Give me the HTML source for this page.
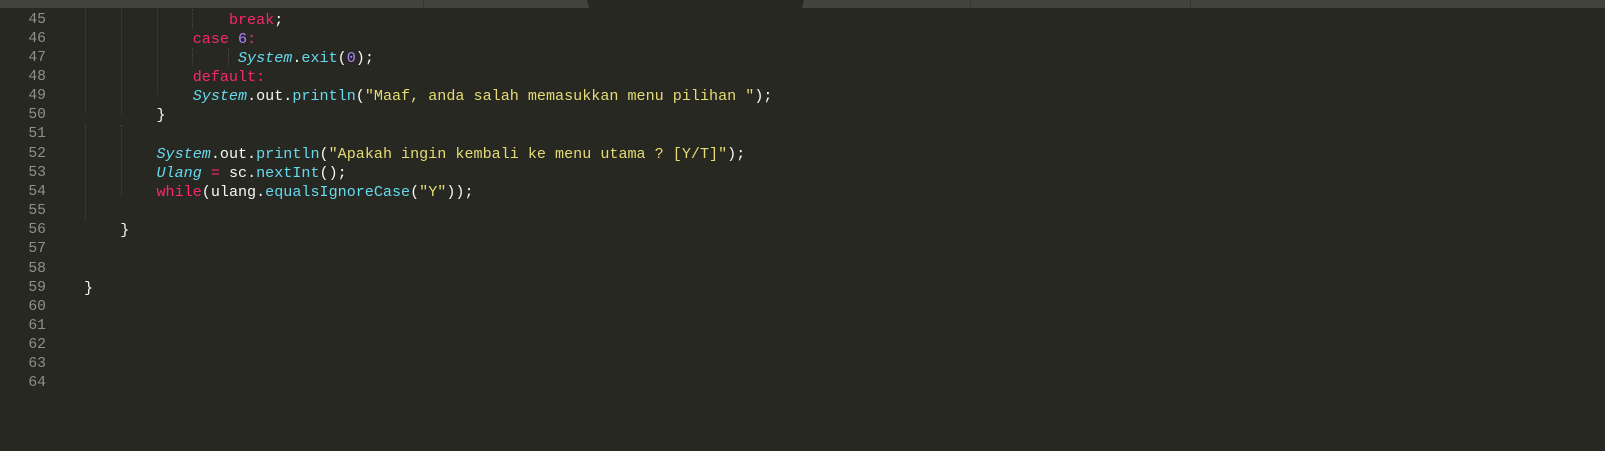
<!DOCTYPE html>
<html><head><style>
html,body{margin:0;padding:0;width:1605px;height:451px;overflow:hidden;background:#272822;}
.tabs{position:absolute;left:0;top:0;width:1605px;height:8px;background:#42433d;}
.tab{position:absolute;top:0;height:8px;background:#272822;left:587px;width:217px;clip-path:polygon(0 0,100% 0,99% 100%,1% 100%);}
.sep{position:absolute;top:0;height:8px;width:1px;background:#35362f;}
.code{position:absolute;left:0;top:10.5px;font-family:"Liberation Mono",monospace;font-size:15.1px;}
.r{position:relative;height:19.16px;line-height:19.16px;white-space:pre;color:#f8f8f2;}
.r b{font-weight:normal;position:absolute;left:0;width:46px;text-align:right;color:#8f908a;font-size:14.7px;}
.r span.t{position:absolute;left:84px;}
.g{position:absolute;top:9px;width:0;border-left:1px dotted #464740;}
.k{color:#f92672}.c{color:#66d9ef}.i{color:#66d9ef;font-style:italic}.s{color:#e6db74}.n{color:#ae81ff}
</style></head><body>
<div class="tabs"><div class="sep" style="left:423px"></div><div class="tab"></div><div class="sep" style="left:970px"></div><div class="sep" style="left:1190px"></div></div>
<div class="g" style="left:85px;height:105px"></div>
<div class="g" style="left:121px;height:105px"></div>
<div class="g" style="left:85px;top:125px;height:95px"></div>
<div class="g" style="left:121px;top:125px;height:70px"></div>
<div class="g" style="left:157px;height:85px"></div>
<div class="g" style="left:192px;height:20px"></div>
<div class="g" style="left:192px;top:48px;height:18px"></div>
<div class="g" style="left:228px;top:48px;height:18px"></div>
<div class="code">
<div class="r"><b>45</b><span class="t">                <span class="k">break</span>;</span></div>
<div class="r"><b>46</b><span class="t">            <span class="k">case</span> <span class="n">6</span><span class="k">:</span></span></div>
<div class="r"><b>47</b><span class="t">                 <span class="i">System</span>.<span class="c">exit</span>(<span class="n">0</span>);</span></div>
<div class="r"><b>48</b><span class="t">            <span class="k">default:</span></span></div>
<div class="r"><b>49</b><span class="t">            <span class="i">System</span>.out.<span class="c">println</span>(<span class="s">"Maaf, anda salah memasukkan menu pilihan "</span>);</span></div>
<div class="r"><b>50</b><span class="t">        }</span></div>
<div class="r"><b>51</b></div>
<div class="r"><b>52</b><span class="t">        <span class="i">System</span>.out.<span class="c">println</span>(<span class="s">"Apakah ingin kembali ke menu utama ? [Y/T]"</span>);</span></div>
<div class="r"><b>53</b><span class="t">        <span class="i">Ulang</span> <span class="k">=</span> sc.<span class="c">nextInt</span>();</span></div>
<div class="r"><b>54</b><span class="t">        <span class="k">while</span>(ulang.<span class="c">equalsIgnoreCase</span>(<span class="s">"Y"</span>));</span></div>
<div class="r"><b>55</b></div>
<div class="r"><b>56</b><span class="t">    }</span></div>
<div class="r"><b>57</b></div>
<div class="r"><b>58</b></div>
<div class="r"><b>59</b><span class="t">}</span></div>
<div class="r"><b>60</b></div>
<div class="r"><b>61</b></div>
<div class="r"><b>62</b></div>
<div class="r"><b>63</b></div>
<div class="r"><b>64</b></div>
</div>
</body></html>
